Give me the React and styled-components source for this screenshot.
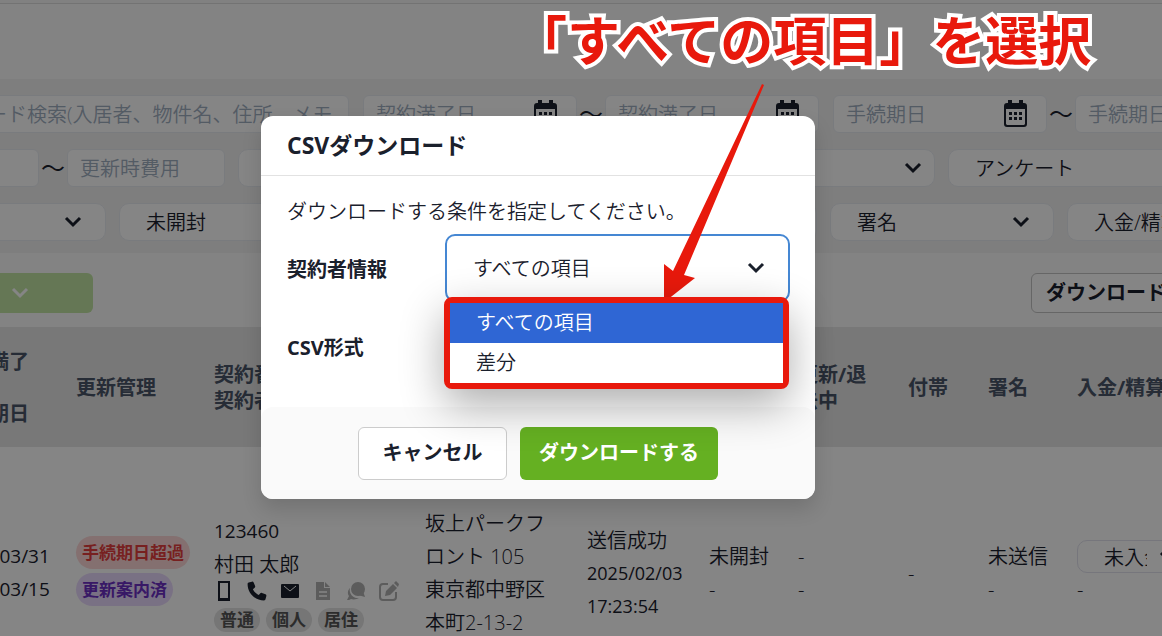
import React from 'react';
import styled, { createGlobalStyle } from 'styled-components';

const filterRows = {
  dates: [
    { label: '契約満了日', id: 'contract' },
    { label: '手続期日', id: 'procedure' },
  ],
  second: ['担当者', '更新状況', 'アンケート'],
  third: ['送信状況', '未開封', '申込', '更新', '署名', '入金/精算'],
};

const CalendarIcon = () => (
  <svg width="24" height="28" viewBox="0 0 24 28" fill="none" aria-hidden="true">
    <path d="M4 0h4v4H4zM15 0h4v4h-4z" fill="currentColor" />
    <path d="M3 3h17a3 3 0 0 1 3 3v18a3 3 0 0 1-3 3H3a3 3 0 0 1-3-3V6a3 3 0 0 1 3-3zM2 9v15l1 1h17l1-1V9z" fill="currentColor" fillRule="evenodd" />
    <path d="M5 12h3v3H5zM10 12h3v3h-3zM15 12h3v3h-3zM5 17h3v3H5zM10 17h3v3h-3zM15 17h3v3h-3z" fill="currentColor" />
  </svg>
);

const ChevronIcon = () => (
  <svg width="18" height="12" viewBox="0 0 18 12" fill="none" aria-hidden="true">
    <path d="M2 2l7 7 7-7" stroke="currentColor" strokeWidth="3" />
  </svg>
);

const ContactIcons = () => (
  <IconRow>
    <svg width="20" height="20" viewBox="0 0 20 20" aria-hidden="true">
      <path d="M4 0h12v20H4zM6 2v15h8V2z" fill="currentColor" fillRule="evenodd" />
    </svg>
    <svg width="20" height="20" viewBox="-16 -16 544 544" aria-hidden="true">
      <path d="M164.900 24.600c-7.700-18.600-28-28.500-47.400-23.200l-88 24C12.100 30.200 0 46 0 64c0 247.400 200.600 448 448 448 18 0 33.800-12.100 38.600-29.500l24-88c5.300-19.400-4.600-39.700-23.200-47.400l-96-40c-16.300-6.800-35.200-2.100-46.300 11.600L304.700 368C234.300 334.700 177.300 277.700 144 207.300l49.300-40.300c13.700-11.200 18.400-30 11.600-46.300z" fill="currentColor" />
    </svg>
    <svg width="20" height="20" viewBox="0 0 20 20" aria-hidden="true">
      <rect x="1" y="3" width="18" height="14" rx="1" fill="currentColor" />
      <path d="M4 5l6 5 6-5" stroke="#fff" strokeWidth="1" fill="none" />
    </svg>
    <MutedIcon width="20" height="20" viewBox="0 0 20 20" aria-hidden="true">
      <path d="M3 1h8v6h6v12H3zM12 1l5 5h-5z" fill="currentColor" />
      <path d="M6 11h8M6 15h8" stroke="#fff" strokeWidth="1.500" />
    </MutedIcon>
    <MutedIcon width="20" height="20" viewBox="0 0 20 20" aria-hidden="true">
      <path d="M4 7a8 8 0 0 0 9 10c-2 1-5 2-8 1-1 1-3 1-4 1l2-4c-2-3-1-6 1-8z" fill="currentColor" />
      <circle cx="12" cy="8" r="7" fill="currentColor" />
      <path d="M17 10l2 6-7-2z" fill="currentColor" />
    </MutedIcon>
    <MutedIcon width="20" height="20" viewBox="0 0 20 20" aria-hidden="true">
      <path d="M9 3H4a3 3 0 0 0-3 3v10a3 3 0 0 0 3 3h10a3 3 0 0 0 3-3v-5" stroke="currentColor" strokeWidth="2" fill="none" />
      <path d="M7 10l7-7 4 4-7 7-5 1zM15 2l2-2 3 3-1 3z" fill="currentColor" />
    </MutedIcon>
  </IconRow>
);

const DateRange = ({ label, id }) => (
  <Range>
    <DateBox>
      <TextInput aria-label={`${label}(開始)`} name={`${id}-from`} placeholder={label} />
      <CalendarIcon />
    </DateBox>
    <Tilde>～</Tilde>
    <DateBox>
      <TextInput aria-label={`${label}(終了)`} name={`${id}-to`} placeholder={label} />
      <CalendarIcon />
    </DateBox>
  </Range>
);

const FilterSelect = ({ label, wide }) => (
  <SelectBox $wide={wide}>
    <Select aria-label={label}>
      <option>{label}</option>
    </Select>
    <ChevronIcon />
  </SelectBox>
);

const Contracts = () => (
  <Page>
    <TopBar />
    <Filters>
      <FilterRow $bleed={86} $gap={14}>
        <SearchBox>
          <TextInput aria-label="キーワード検索" placeholder="キーワード検索(入居者、物件名、住所、メモ" />
        </SearchBox>
        {filterRows.dates.map((d) => <DateRange key={d.id} {...d} />)}
      </FilterRow>
      <FilterRow $bleed={119} $gap={13}>
        <Range>
          <FeeBox><TextInput aria-label="更新時費用(下限)" placeholder="更新時費用" /></FeeBox>
          <Tilde>～</Tilde>
          <FeeBox><TextInput aria-label="更新時費用(上限)" placeholder="更新時費用" /></FeeBox>
        </Range>
        {filterRows.second.map((label) => <FilterSelect key={label} label={label} wide />)}
      </FilterRow>
      <FilterRow $bleed={118} $gap={13}>
        {filterRows.third.map((label) => <FilterSelect key={label} label={label} />)}
      </FilterRow>
    </Filters>
    <Toolbar>
      <BulkButton type="button" aria-label="一括操作" disabled><ChevronIcon /></BulkButton>
      <DownloadButton type="button">ダウンロード</DownloadButton>
    </Toolbar>
    <TableArea>
      <Table>
        <colgroup>
          {[127, 138, 211, 162, 122, 89, 110, 80, 89, 160].map((w, i) => <Col key={i} $w={w} />)}
        </colgroup>
        <thead>
          <tr>
            <Th>契約満了<br />日<br />手続期日</Th>
            <Th>更新管理</Th>
            <Th>契約番号<br />契約者</Th>
            <Th>物件</Th>
            <Th>送信</Th>
            <Th>開封</Th>
            <Th>更新/退<br />去中</Th>
            <Th>付帯</Th>
            <Th>署名</Th>
            <Th>入金/精算</Th>
          </tr>
        </thead>
        <tbody>
          <tr>
            <Td><Num>2025/03/31<br />2025/03/15</Num></Td>
            <Td>
              <Badge $bg="#fed7d7" $color="#e53e3e">手続期日超過</Badge>
              <Badge $bg="#e9d8fd" $color="#6b2fc4">更新案内済</Badge>
            </Td>
            <Td>
              <Num>123460</Num>村田 太郎
              <ContactIcons />
              <Tags>
                <Tag>普通</Tag>
                <Tag>個人</Tag>
                <Tag>居住</Tag>
              </Tags>
            </Td>
            <Td>坂上パークフ<br />ロント 105<br />東京都中野区<br />本町2-13-2</Td>
            <Td>送信成功<SentAt>2025/02/03<br />17:23:54</SentAt></Td>
            <Td>未開封<br />-</Td>
            <Td>-<br />-</Td>
            <Td>-</Td>
            <Td>未送信<br />-</Td>
            <Td>
              <PaymentBox>
                <Select aria-label="入金状況"><option>未入金</option></Select>
                <ChevronIcon />
              </PaymentBox>
              -
            </Td>
          </tr>
        </tbody>
      </Table>
    </TableArea>
  </Page>
);

const DownloadModal = () => (
  <Modal role="dialog" aria-labelledby="csv-title">
    <ModalHeader id="csv-title">CSVダウンロード</ModalHeader>
    <ModalBody>
      <Lead>ダウンロードする条件を指定してください。</Lead>
      <Field>
        <FieldLabel htmlFor="target">契約者情報</FieldLabel>
        <TargetBox>
          <Select id="target" defaultValue="all">
            <option value="all">すべての項目</option>
            <option value="diff">差分</option>
          </Select>
          <ChevronIcon />
          <OptionList role="listbox" aria-label="契約者情報">
            <Option role="option" aria-selected="true" $active>すべての項目</Option>
            <Option role="option" aria-selected="false">差分</Option>
          </OptionList>
        </TargetBox>
      </Field>
      <FormatRow>CSV形式</FormatRow>
    </ModalBody>
    <ModalFooter>
      <CancelButton type="button">キャンセル</CancelButton>
      <SubmitButton type="button">ダウンロードする</SubmitButton>
    </ModalFooter>
  </Modal>
);

export default function App() {
  return (
    <Screen>
      <GlobalStyle />
      <Contracts />
      <Overlay>
        <DownloadModal />
      </Overlay>
      <Callout>「すべての項目」を選択</Callout>
      <Arrow width="34" height="218" viewBox="0 0 34 218" aria-hidden="true">
        <path d="M99 0l2 1-80 190 11 3-28 22H1v-36l9 7z" fill="#e8190c" />
      </Arrow>
    </Screen>
  );
}

const GlobalStyle = createGlobalStyle`
  * {
    box-sizing: border-box;
  }
  body {
    margin: 0;
    overflow: hidden;
    color: #1a202c;
    font-family: "Open Sans", "Noto Sans CJK JP", sans-serif;
    font-size: 20px;
    font-weight: 350;
  }
  input, select, button {
    font: inherit;
    color: inherit;
  }
`;

const Screen = styled.div`
  position: relative;
  height: 100vh;
  overflow: hidden;
`;

const Page = styled.main`
  background: #fff;
`;

const TopBar = styled.header`
  height: 79px;
  background: #fcfcfc;
  border-top: 3px solid #f7f7f7;
  box-shadow: inset 0 1px #dcdcdc;
`;

const Filters = styled.section`
  display: flex;
  flex-direction: column;
  gap: 16px;
  padding: 16px 0 12px;
  background: #f2f2f2;
`;

const FilterRow = styled.div`
  display: flex;
  gap: ${(p) => p.$gap}px;
  margin-left: -${(p) => p.$bleed}px;
`;

const Range = styled.div`
  display: flex;
  flex: none;
`;

const Tilde = styled.span`
  width: 28px;
  font-size: 24px;
  font-weight: 400;
  line-height: 38px;
  text-align: center;
`;

const Box = styled.div`
  display: flex;
  align-items: center;
  flex: none;
  height: 38px;
  background: #fff;
  border: 1px solid #e9ecf2;
  border-radius: 6px;
`;

const SearchBox = styled(Box)`
  width: 435px;
`;

const DateBox = styled(Box)`
  width: 214px;
  padding-right: 18px;
`;

const FeeBox = styled(Box)`
  width: 158px;
`;

const TextInput = styled.input`
  flex: 1;
  min-width: 0;
  height: 100%;
  padding: 0 12px;
  border: 0;
  background: none;
  outline: none;
  &::placeholder {
    color: #a0aec0;
    opacity: 1;
  }
`;

const SelectBox = styled(Box)`
  width: ${(p) => (p.$wide ? 342 : 224)}px;
  padding-right: ${(p) => (p.$wide ? 12 : 23)}px;
  border-radius: 10px;
`;

const Select = styled.select`
  flex: 1;
  min-width: 0;
  height: 100%;
  padding: 0 0 0 26px;
  appearance: none;
  border: 0;
  background: none;
  outline: none;
`;

const Toolbar = styled.div`
  display: flex;
  justify-content: space-between;
  align-items: flex-start;
  padding: 20px 0 14px;
  background: #fcfcfc;
`;

const BulkButton = styled.button`
  display: flex;
  align-items: center;
  justify-content: flex-end;
  width: 101px;
  height: 40px;
  margin-left: -8px;
  padding-right: 64px;
  border: 0;
  border-radius: 6px;
  background: #c1e5a3;
  color: #fff;
`;

const DownloadButton = styled.button`
  flex: none;
  width: 150px;
  height: 40px;
  margin-right: -19px;
  padding: 0 14px 4px;
  border: 1px solid #c4c4c4;
  border-radius: 6px;
  background: #fff;
  font-weight: 700;
  white-space: nowrap;
`;

const TableArea = styled.div`
  margin-left: -63px;
`;

const Table = styled.table`
  width: 1288px;
  table-layout: fixed;
  border-collapse: collapse;
`;

const Col = styled.col`
  width: ${(p) => p.$w}px;
`;

const Th = styled.th`
  height: 120px;
  padding: 2px 12px 0;
  background: #e7e7e7;
  color: #4a5568;
  font-weight: 700;
  line-height: 26px;
  text-align: left;
  white-space: nowrap;
`;

const Td = styled.td`
  height: 252px;
  padding: 0 12px;
  line-height: 33px;
  white-space: nowrap;
`;

const Num = styled.div`
  font-size: 19px;
  font-weight: 400;
`;

const SentAt = styled.div`
  font-size: 18px;
  font-weight: 400;
`;

const Badge = styled.span`
  display: block;
  width: fit-content;
  height: 33px;
  margin-bottom: 4px;
  padding: 0 6px;
  border-radius: 17px;
  background: ${(p) => p.$bg};
  color: ${(p) => p.$color};
  font-size: 17px;
  font-weight: 700;
`;

const IconRow = styled.div`
  display: flex;
  gap: 13px;
  padding-bottom: 7px;
`;

const MutedIcon = styled.svg`
  color: #b0b0b0;
`;

const Tags = styled.div`
  display: flex;
  gap: 6px;
`;

const Tag = styled.span`
  padding: 0 6px;
  border-radius: 12px;
  background: #e2e2e2;
  color: #555;
  font-size: 17px;
  font-weight: 700;
  line-height: 24px;
`;

const PaymentBox = styled(Box)`
  gap: 12px;
  width: 124px;
  height: 33px;
  padding-right: 23px;
  border-color: #e2e2ee;
  border-radius: 10px;
`;

const Overlay = styled.div`
  position: absolute;
  inset: 0;
  display: flex;
  justify-content: center;
  align-items: flex-start;
  padding: 116px 86px 0 0;
  background: rgba(0, 0, 0, 0.48);
`;

const Modal = styled.section`
  width: 554px;
  border-radius: 12px;
  background: #fff;
  box-shadow: 0 10px 20px rgba(0, 0, 0, 0.14);
`;

const ModalHeader = styled.h2`
  margin: 0;
  padding: 0 26px;
  border-bottom: 1px solid #e2e2e2;
  font-size: 23px;
  line-height: 59px;
`;

const ModalBody = styled.div`
  padding: 18px 25px 0 26px;
`;

const Lead = styled.p`
  margin: 0;
  line-height: 36px;
`;

const Field = styled.div`
  display: flex;
  align-items: center;
  justify-content: space-between;
  margin-top: 4px;
`;

const FieldLabel = styled.label`
  font-weight: 700;
`;

const TargetBox = styled(Box)`
  position: relative;
  width: 345px;
  height: 68px;
  padding-right: 23px;
  border: 2px solid #4587d3;
  border-radius: 10px;
`;

const OptionList = styled.ul`
  position: absolute;
  top: 61px;
  left: -3px;
  width: 345px;
  margin: 0;
  padding: 0;
  border: 6px solid #e8190c;
  border-radius: 8px;
  background: #fff;
  box-shadow: 0 16px 44px rgba(0, 0, 0, 0.32);
  list-style: none;
  z-index: 1;
`;

const Option = styled.li`
  padding: 0 26px;
  line-height: 40px;
  background: ${(p) => (p.$active ? '#2f66d4' : '#fff')};
  color: ${(p) => (p.$active ? '#fff' : '#1a202c')};
`;

const FormatRow = styled.div`
  height: 105px;
  font-weight: 700;
  line-height: 92px;
`;

const ModalFooter = styled.footer`
  display: flex;
  justify-content: center;
  gap: 13px;
  padding: 20px 0 19px;
  border-radius: 12px;
  background: #fafafa;
`;

const CancelButton = styled.button`
  width: 149px;
  height: 53px;
  padding: 0 0 4px;
  border: 1px solid #ccc;
  border-radius: 6px;
  background: #fff;
  font-weight: 700;
`;

const SubmitButton = styled(CancelButton)`
  width: 198px;
  border: 0;
  background: #65b022;
  color: #fff;
`;

const Callout = styled.p`
  position: absolute;
  top: 0;
  left: 514px;
  margin: 0;
  color: #e8190c;
  font-size: 53px;
  font-weight: 700;
  line-height: 82px;
  white-space: nowrap;
  paint-order: stroke fill;
  -webkit-text-stroke: 8px #fff;
`;

const Arrow = styled.svg`
  position: absolute;
  top: 84px;
  left: 663px;
  overflow: visible;
  pointer-events: none;
`;
